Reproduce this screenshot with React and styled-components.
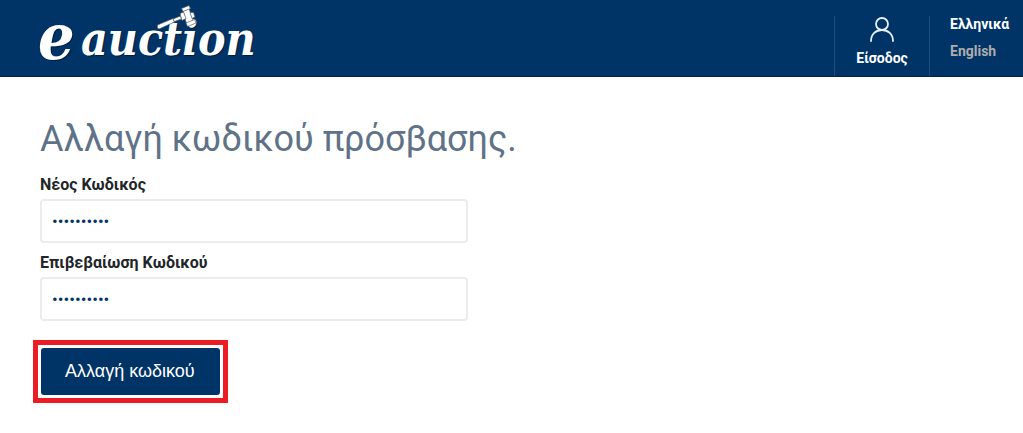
import React, {useState} from 'react'
import styled, {createGlobalStyle} from 'styled-components'

const GlobalStyle = createGlobalStyle`
  * {
    box-sizing: border-box;
  }
  body {
    margin: 0;
    background-color: #FFF;
    color: #212529;
    font-family: Roboto, "Liberation Sans", sans-serif;
  }
`
const Header = styled.header`
  background-color: #003366;
  border-bottom: 1px solid #00264d;
  height: 77px;
  padding-left: 36px;
  display: flex;
  justify-content: space-between;
`
const LogoLink = styled.a`
  display: block;
`
const LogoImage = styled.svg`
  display: block;
  overflow: visible;
`
const LogoText = styled.text`
  font-family: "DejaVu Serif Condensed", "DejaVu Serif", serif;
  font-style: italic;
  font-weight: 700;
  font-size: ${props => props.size};
`
const HeaderMenu = styled.div`
  display: flex;
  padding-top: 16px;
`
const Login = styled.a`
  width: 95px;
  border-left: 1px solid #1f4c7a;
  display: flex;
  flex-direction: column;
  align-items: center;
  gap: 8px;
  color: #FFF;
  font-size: 14px;
  font-weight: 700;
  line-height: 17px;
  text-decoration: none;
`
const Languages = styled.nav`
  width: 94px;
  border-left: 1px solid #1f4c7a;
  padding-left: 20px;
  display: flex;
  flex-direction: column;
  gap: 11px;
`
const Language = styled.a`
  color: ${props => props.color};
  font-size: 14px;
  font-weight: 700;
  line-height: 16px;
  text-decoration: none;
`
const Content = styled.main`
  padding: 40px;
`
const Title = styled.h1`
  margin: 0;
  color: #5f7388;
  font-size: 36px;
  font-weight: 400;
  line-height: 44px;
`
const Form = styled.form`
  margin-top: 14px;
  display: flex;
  flex-direction: column;
  align-items: flex-start;
`
const Label = styled.label`
  margin-bottom: 4px;
  font-size: 16px;
  font-weight: 700;
  line-height: 20px;
`
const Input = styled.input`
  width: 100%;
  max-width: 428px;
  height: 44px;
  margin-bottom: 10px;
  padding: 0 10px;
  border: 2px solid #ececec;
  border-radius: 4px;
  background-color: #FFF;
  color: #003366;
  font-family: Roboto, sans-serif;
  font-size: 17px;
  outline: none;
`
const Highlight = styled.div`
  margin: 9px 0 0 -7px;
  padding: 3px;
  border: 5px solid #ed1c24;
`
const Button = styled.button`
  display: block;
  height: 47px;
  padding: 0 25px 0 24px;
  border: none;
  border-radius: 3px;
  background-color: #003366;
  color: #FFF;
  font-family: "Liberation Sans", Arial, sans-serif;
  font-size: 18px;
  cursor: pointer;
`

function Logo() {
  return (
    <LogoImage width="228" height="76" viewBox="0 0 228 76" role="img" aria-label="e auction">
      <g fill="#001f40" transform="translate(1 1)">
        <LogoText size="64px" x="2" y="59">e</LogoText>
        <LogoText size="46px" x="45" y="55">auction</LogoText>
      </g>
      <g fill="#FFF">
        <LogoText size="64px" x="2" y="59">e</LogoText>
        <LogoText size="46px" x="45" y="55">auction</LogoText>
      </g>
      <g fill="#FFF" stroke="#4d5a68" strokeWidth="0.7" strokeLinejoin="round">
        <path d="M121.5 25 L137 18.5 L138.5 22 L123 29 Q120.5 28.5 121.5 25Z" />
        <path d="M137 19 L144.5 16 L145.5 19 L138.5 21.5Z" />
        <path d="M147 10.5 L153 8.5 L157.5 21.5 L150.5 24Z" />
        <path d="M145.5 8.5 L153 5.5 L154.5 8.5 L147 11.5Z" />
        <path d="M144 13.5 L147.5 12 L150 18.5 L146 20.5Z" />
        <path d="M154 12.5 L157.5 12.5 L159 17 L156 18.5Z" />
        <path d="M150 23 L158.5 19.5 L160 23 L151.5 26.5Z" />
      </g>
    </LogoImage>
  )
}

function UserIcon() {
  return (
    <svg width="26" height="26" viewBox="0 0 26 26" fill="none" stroke="#E6F0FA" strokeWidth="1.8" strokeLinecap="round" aria-hidden="true">
      <circle cx="13" cy="8" r="6" />
      <path d="M2 25 C2 18 7 14 13 14 C19 14 24 18 24 25" />
    </svg>
  )
}

function App() {

  const [password, setPassword] = useState('password12')
  const [confirm, setConfirm] = useState('password12')

  return (
    <>
      <GlobalStyle />
      <Header>
        <LogoLink href="#"><Logo /></LogoLink>
        <HeaderMenu>
          <Login href="#login">
            <UserIcon />
            <span>Είσοδος</span>
          </Login>
          <Languages>
            <Language href="#el" color="#FFF">Ελληνικά</Language>
            <Language href="#en" color="#adadad">English</Language>
          </Languages>
        </HeaderMenu>
      </Header>
      <Content>
        <Title>Αλλαγή κωδικού πρόσβασης.</Title>
        <Form onSubmit={e => e.preventDefault()}>
          <Label htmlFor="password">Νέος Κωδικός</Label>
          <Input id="password" type="password" value={password} onChange={e => setPassword(e.target.value)} />
          <Label htmlFor="confirm">Επιβεβαίωση Κωδικού</Label>
          <Input id="confirm" type="password" value={confirm} onChange={e => setConfirm(e.target.value)} />
          <Highlight>
            <Button type="submit">Αλλαγή κωδικού</Button>
          </Highlight>
        </Form>
      </Content>
    </>
  );
}

export default App;
